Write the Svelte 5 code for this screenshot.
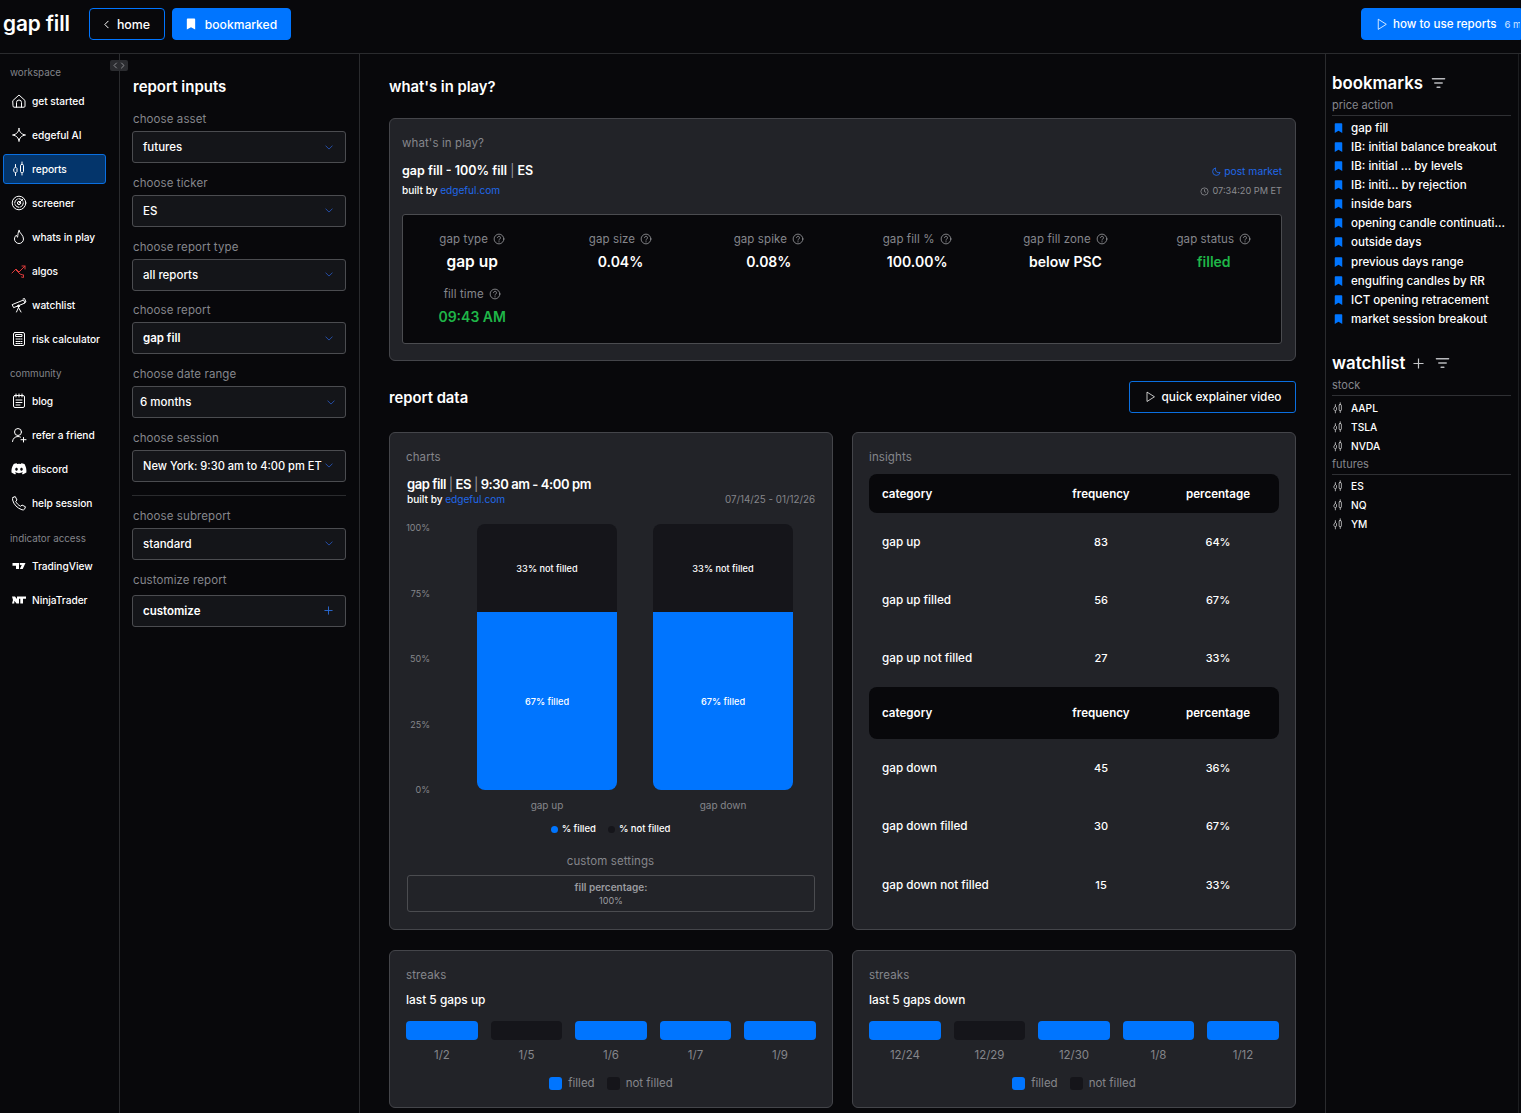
<script>
  const I = {
    home: '<path d="M2 7.500 8 2l6 5.500v5.700a1 1 0 0 1-1 1H3a1 1 0 0 1-1-1z"/><path d="M5.500 14.200V9.500a2.500 2.500 0 0 1 5 0v4.700"/>',
    spark: '<path d="M8 1.500c.5 3.700 2.300 5.800 6.500 6.500-4.200.7-6 2.800-6.500 6.500C7.500 10.800 5.700 8.700 1.500 8 5.700 7.300 7.500 5.200 8 1.500z"/>',
    candle: '<path d="M4.500 3.500v2.500M4.500 12v2.500M11 1v2.500M11 11.500V14"/><path d="M3 7.500 4.500 6 6 7.500V10.500L4.500 12 3 10.500z"/><rect x="9.500" y="3.500" width="3" height="8" rx="1"/>',
    radar: '<circle cx="8" cy="8" r="6.800"/><circle cx="8" cy="8" r="4.300" stroke-dasharray="5 1.500"/><circle cx="8" cy="8" r="1.600"/><path d="m8 8 4-4"/>',
    flame: '<path d="M8 1.500c.5 2.500 4.500 4.600 4.500 8.500a4.500 4.500 0 0 1-9 0c0-1.800 1-3 1.800-3.800.2 1 .7 1.700 1.300 2C7 6 6.800 3.500 8 1.500z"/>',
    algos: '<path d="M1 10 5 6l3 3 6-6M11 3h3v3M5 7l4 4 3 1M10.500 14l2 .5V12"/>',
    scope: '<path d="m1.500 7.500 11-4.500 1.500 3-11 4.500zM12 2l1.500-.5 1.500 3.500-1.500.5M7.500 9v1.500M5.500 15l2-4.500 2.500 4.500"/><circle cx="7.500" cy="9" r="1"/>',
    calc: '<rect x="2.500" y="1.500" width="11" height="13" rx="1.500"/><rect x="5" y="3.500" width="6" height="2"/><path d="M5 8h1.500M7.500 8H9M10 8h1M5 10.500h1.500M7.500 10.500H9M10 10.500h1M5 12.500h1.500M7.500 12.500H9M10 12.500h1"/>',
    blog: '<rect x="2.500" y="2.500" width="11" height="12" rx="1.500"/><path d="M5 1v3M8 1v3M11 1v3M5 7h6M5 9.500h6M5 12h4"/>',
    user: '<circle cx="7" cy="5" r="3.500"/><path d="M1.500 14.500c.3-3 2.500-5 5.500-5 1 0 1.700.2 2.500.6M12.500 10.500v4.500M10 12.700h5"/>',
    phone: '<path d="M2 2.500 4.200 1.500 6 5 4.700 6.300c.8 2 2.700 4 5 5l1.300-1.300 3.500 1.800-1 2.400c-.4.700-1.500.900-2.500.6C6 13 2.800 9.500 1.600 5c-.2-1 0-2 .4-2.500z"/>',
    filter: '<path d="M1.500 3h13M4 7.500h8M6.500 12h3"/>',
    q: '<circle cx="8" cy="8" r="6.500"/><path d="M6 6.200a2 2 0 1 1 3 1.800c-.7.400-1 .8-1 1.500"/><path d="M8 11.500v.5"/>',
    play: '<path d="M4 2v12l9.500-6z"/>'
  };
  const nav1 = [['home','get started'],['spark','edgeful AI'],['candle','reports'],['radar','screener'],['flame','whats in play'],['algos','algos'],['scope','watchlist'],['calc','risk calculator']];
  const nav2 = [['blog','blog'],['user','refer a friend'],['discord','discord'],['phone','help session']];
  const nav3 = [['tv','TradingView'],['nt','NinjaTrader']];
  const selects = [
    ['choose asset','futures',''],['choose ticker','ES',''],['choose report type','all reports',''],
    ['choose report','gap fill','semi'],['choose date range','6 months','narrow'],['choose session','New York: 9:30 am to 4:00 pm ET','tight']
  ];
  const marks = ['gap fill','IB: initial balance breakout','IB: initial ... by levels','IB: initi... by rejection','inside bars','opening candle continuati...','outside days','previous days range','engulfing candles by RR','ICT opening retracement','market session breakout'];
  const stats = [['gap type','gap up','big'],['gap size','0.04%',''],['gap spike','0.08%',''],['gap fill %','100.00%',''],['gap fill zone','below PSC',''],['gap status','filled','green'],['fill time','09:43 AM','green']];
  const rows1 = [['gap up','83','64%'],['gap up filled','56','67%'],['gap up not filled','27','33%']];
  const rows2 = [['gap down','45','36%'],['gap down filled','30','67%'],['gap down not filled','15','33%']];
  const streaks = [
    ['last 5 gaps up',[['1/2',1],['1/5',0],['1/6',1],['1/7',1],['1/9',1]]],
    ['last 5 gaps down',[['12/24',1],['12/29',0],['12/30',1],['1/8',1],['1/12',1]]]
  ];
</script>

{#snippet icon(name, cls = '')}
  <svg class={'ico ' + cls} viewBox="0 0 16 16" fill="none" stroke="currentColor" stroke-width="1" stroke-linecap="round" stroke-linejoin="round">{@html I[name]}</svg>
{/snippet}
{#snippet mark(cls = '')}
  <svg class={'mark ' + cls} viewBox="0 0 12 14"><path d="M1 1.500A1 1 0 0 1 2 .5h8a1 1 0 0 1 1 1v12L6 10.800 1 13.500z" fill="currentColor"/></svg>
{/snippet}
{#snippet chev()}
  <svg class="chev" viewBox="0 0 10 6" fill="none" stroke="currentColor" stroke-width="1" stroke-linecap="round" stroke-linejoin="round"><path d="m1 1 4 4 4-4"/></svg>
{/snippet}

<div class="page">
  <header>
    <h1>gap fill</h1>
    <button class="hbtn outline"><svg class="lt" viewBox="0 0 6 10" fill="none" stroke="currentColor" stroke-width="1.200" stroke-linecap="round" stroke-linejoin="round"><path d="M5 1 1 5l4 4"/></svg>home</button>
    <button class="hbtn solid">{@render mark('wm')}bookmarked</button>
    <button class="hbtn solid how">{@render icon('play','hp')}how to use reports <span class="mins">6 min</span></button>
  </header>

  <div class="body">
    <nav>
      <span class="toggle">
        <svg viewBox="0 0 18 11" fill="none" stroke="#8b8c90" stroke-width="1" stroke-linecap="round" stroke-linejoin="round"><path d="M6.500 3 4 5.500 6.500 8M11.500 3 14 5.500 11.500 8"/></svg>
      </span>
      <div class="ngroup first">workspace</div>
      {#each nav1 as [ic, label]}
        <a class="nitem" class:active={label === 'reports'} class:red={ic === 'algos'}>
          {@render icon(ic, 'nico')}<span>{label}</span>
        </a>
      {/each}
      <div class="ngroup second">community</div>
      {#each nav2 as [ic, label]}
        <a class="nitem">
          {#if ic === 'discord'}
            <svg class="ico nico" viewBox="0 0 16 16"><path fill="currentColor" d="M13.300 3.100A12 12 0 0 0 10.300 2.200l-.4.800a11 11 0 0 0-3.800 0l-.4-.8a12 12 0 0 0-3 .9C.800 6 .3 8.800.5 11.500a12 12 0 0 0 3.700 1.900l.8-1.300-1.200-.6.300-.2c2.400 1.100 5.300 1.100 7.700 0l.3.200-1.200.6.800 1.300a12 12 0 0 0 3.700-1.900c.3-3.100-.5-5.900-1.900-8.400zM5.500 9.800c-.7 0-1.300-.7-1.300-1.500s.6-1.500 1.300-1.500 1.300.7 1.300 1.500-.6 1.500-1.300 1.500zm5 0c-.7 0-1.300-.7-1.300-1.500s.6-1.500 1.300-1.500 1.300.7 1.300 1.500-.6 1.500-1.300 1.500z"/></svg>
          {:else}
            {@render icon(ic, 'nico')}
          {/if}
          <span>{label}</span>
        </a>
      {/each}
      <div class="ngroup third">indicator access</div>
      {#each nav3 as [ic, label]}
        <a class="nitem">
          {#if ic === 'tv'}
            <svg class="ico nico" viewBox="0 0 16 16"><path fill="currentColor" d="M1.500 5h6.500v6H5V7.800H1.500zM9 5h5.500l-2.800 6H8.800l2.100-4.200a1.300 1.300 0 0 1-1.900-1.800z"/></svg>
          {:else}
            <svg class="ico nico" viewBox="0 0 16 16"><path fill="currentColor" d="M1 4.500h3l2 2.500V4.500h9v2.300h-3v4.700H9.300V6.800H8v4.700H5.500L3.300 8.800v2.700H1l1-3.500z"/></svg>
          {/if}
          <span>{label}</span>
        </a>
      {/each}
    </nav>

    <aside class="inputs">
      <h2>report inputs</h2>
      {#each selects as [label, value, cls]}
        <div class="field">
          <label>{label}</label>
          <div class={'select ' + cls}><span>{value}</span>{@render chev()}</div>
        </div>
      {/each}
      <hr />
      <div class="field">
        <label>choose subreport</label>
        <div class="select"><span>standard</span>{@render chev()}</div>
      </div>
      <div class="field cust">
        <label>customize report</label>
        <div class="select semi"><span>customize</span><svg class="plus" viewBox="0 0 10 10" fill="none" stroke="currentColor" stroke-width="1"><path d="M5 .5v9M.5 5h9"/></svg></div>
      </div>
    </aside>

    <main>
      <h2 class="sect">what's in play?</h2>
      <section class="card play">
        <div class="clabel">what's in play?</div>
        <div class="phead">
          <div>
            <div class="ptitle">gap fill - 100% fill <i>|</i> ES</div>
            <div class="built">built by <b>edgeful.com</b></div>
          </div>
          <div class="pright">
            <div class="post"><svg viewBox="0 0 10 10" fill="none" stroke="currentColor" stroke-width="1"><path d="M4 1a4.200 4.200 0 1 0 5 5A3.800 3.800 0 0 1 4 1z"/></svg>post market</div>
            <div class="clock"><svg viewBox="0 0 10 10" fill="none" stroke="currentColor" stroke-width=".9"><circle cx="5" cy="5" r="4"/><path d="M5 2.500V5l1.700 1"/></svg>07:34:20 PM ET</div>
          </div>
        </div>
        <div class="inner">
          <div class="stats">
            {#each stats as [l, v, c]}
              <div class="stat">
                <div class="sl">{l}{@render icon('q','qi')}</div>
                <div class={'sv ' + c}>{v}</div>
              </div>
            {/each}
          </div>
        </div>
      </section>

      <div class="rd">
        <h2 class="sect">report data</h2>
        <button class="qev">{@render icon('play','qp')}quick explainer video</button>
      </div>

      <div class="two">
        <section class="card charts">
          <div class="clabel">charts</div>
          <div class="ctitle">gap fill <i>|</i> ES <i>|</i> 9:30 am - 4:00 pm</div>
          <div class="csub">
            <div class="built">built by <b>edgeful.com</b></div>
            <div class="range">07/14/25 - 01/12/26</div>
          </div>
          <div class="chart">
            <div class="yaxis"><span>100%</span><span>75%</span><span>50%</span><span>25%</span><span>0%</span></div>
            <div class="plot">
              {#each ['gap up','gap down'] as name}
                <div class="col">
                  <div class="bar">
                    <div class="nf">33% not filled</div>
                    <div class="fl">67% filled</div>
                  </div>
                  <div class="bname">{name}</div>
                </div>
              {/each}
            </div>
          </div>
          <div class="legend">
            <span><i class="dot blue"></i>% filled</span>
            <span><i class="dot dark"></i>% not filled</span>
          </div>
          <div class="cs">custom settings</div>
          <div class="csbox">
            <b>fill percentage:</b>
            <span>100%</span>
          </div>
        </section>

        <section class="card insights">
          <div class="clabel">insights</div>
          <div class="thead h1"><span>category</span><span class="c">frequency</span><span class="c">percentage</span></div>
          {#each rows1 as [a, b, c]}
            <div class="trow r58"><span>{a}</span><span class="c">{b}</span><span class="c">{c}</span></div>
          {/each}
          <div class="thead h2"><span>category</span><span class="c">frequency</span><span class="c">percentage</span></div>
          {#each rows2 as [a, b, c]}
            <div class="trow"><span>{a}</span><span class="c">{b}</span><span class="c">{c}</span></div>
          {/each}
        </section>

        {#each streaks as [title, items]}
          <section class="card streak">
            <div class="clabel">streaks</div>
            <div class="stitle">{title}</div>
            <div class="sgrid">
              {#each items as [d, f]}
                <div class="sc"><div class="sb" class:on={f}></div><span>{d}</span></div>
              {/each}
            </div>
            <div class="slegend">
              <span><i class="sq blue"></i>filled</span>
              <span><i class="sq dark"></i>not filled</span>
            </div>
          </section>
        {/each}
      </div>
    </main>

    <aside class="right">
      <h3 class="rh">bookmarks {@render icon('filter','fi')}</h3>
      <div class="rsub">price action</div>
      {#each marks as m}
        <div class="ritem">{@render mark('rm')}<span>{m}</span></div>
      {/each}
      <h3 class="rh wl">watchlist
        <svg class="wplus" viewBox="0 0 12 12" fill="none" stroke="currentColor" stroke-width="1.300"><path d="M6 .5v11M.5 6h11"/></svg>
        {@render icon('filter','fi')}
      </h3>
      <div class="rsub">stock</div>
      {#each ['AAPL','TSLA','NVDA'] as t}
        <div class="ritem up">{@render icon('candle','rc')}<span>{t}</span></div>
      {/each}
      <div class="rsub fut">futures</div>
      {#each ['ES','NQ','YM'] as t}
        <div class="ritem up">{@render icon('candle','rc')}<span>{t}</span></div>
      {/each}
    </aside>
  </div>
</div>

<style>
  :global(body) { margin: 0; background: #08080b; }
  .page {
    width: 1521px; height: 1113px; overflow: hidden; background: #08080b; color: #fff;
    font-family: Inter, "Liberation Sans", sans-serif; font-size: 11px;
    display: flex; flex-direction: column;
  }
  button { font: inherit; color: inherit; cursor: pointer; }
  h1, h2, h3 { margin: 0; }
  header {
    height: 48px; padding: 0 0 5px 3px; flex: none; border-bottom: 1px solid #2a2b2e; display: flex; align-items: center;
    box-sizing: content-box; position: relative;
  }
  h1 { font-size: 20.800px; font-weight: 600; width: 86px; letter-spacing: -.1px; margin-top: -2px; }
  .hbtn {
    height: 32px; border-radius: 4px; display: inline-flex; align-items: center; font-size: 12.100px; font-weight: 500;
    border: 1px solid #0075ff; background: #0075ff; padding: 0; box-sizing: border-box; white-space: nowrap;
  }
  .outline { background: transparent; width: 76px; justify-content: center; gap: 8px; font-size: 12.400px; }
  .lt { width: 5px; height: 9px; }
  .solid { margin-left: 7px; width: 119px; justify-content: center; gap: 9px; }
  .how { margin-left: auto; width: 160px; justify-content: flex-start; padding-left: 13px; gap: 5px; flex: none; overflow: hidden; border-radius: 4px 0 0 4px; font-size: 11.600px; }
  .hp { width: 13px; height: 13px; flex: none; }
  .mins { color: #b9d8ff; font-size: 9.500px; margin-left: 3px; }
  .mark { width: 10px; height: 12px; flex: none; }
  .wm { color: #fff; }

  .body { display: flex; flex: 1; min-height: 0; }
  nav { flex: none; border-right: 1px solid #2a2b2e; position: relative; padding: 0 3px; box-sizing: content-box; width: 113px; }
  .toggle { position: absolute; right: -9px; top: 6px; width: 18px; height: 11px; background: #2b2c30; border-radius: 2px; display: block; z-index: 2; }
  .toggle svg { display: block; width: 18px; height: 11px; }
  .ngroup { color: #83848a; font-size: 9.800px; height: 20px; line-height: 20px; padding-left: 7px; margin-bottom: 2px; }
  .ngroup.first { margin-top: 9px; margin-bottom: 3px; }
  .ngroup.second { margin-top: 10px; }
  .ngroup.third { margin-top: 11px; }
  .nitem {
    height: 30px; margin-bottom: 4px; display: flex; align-items: center; gap: 5px; padding-left: 8px; box-sizing: border-box;
    font-size: 10.200px; font-weight: 500; border-radius: 3px; border: 1px solid transparent; white-space: nowrap; width: 103px;
    letter-spacing: -.05px;
  }
  .nitem.active { background: #04356b; border-color: #0a6fe0; }
  .nitem .nico { width: 16px; height: 16px; margin-left: -1px; color: #fff; flex: none; }
  .nitem.red .nico { color: #d93a3a; }
  .ico { display: block; }

  .inputs { flex: none; border-right: 1px solid #2a2b2e; padding: 0 13px 0 12px; box-sizing: border-box; width: 240px; }
  .inputs h2 { font-size: 15px; font-weight: 600; margin-top: 23px; height: 20px; line-height: 20px; margin-bottom: 15px; padding-left: 1px; }
  .field { margin-bottom: 12.800px; }
  .field label { display: block; color: #85868b; font-size: 11.500px; height: 20px; line-height: 14.500px; margin-bottom: -1px; letter-spacing: .1px; padding-left: 1px; }
  .select {
    height: 32px; border: 1px solid #4b4c50; border-radius: 3px; background: #141519; display: flex; align-items: center;
    padding: 0 12px 0 10px; justify-content: space-between; font-size: 11.500px; font-weight: 500; box-sizing: border-box;
  }
  .select.semi { font-weight: 600; }
  .select.narrow { padding: 0 10px 0 7px; }
  .select.tight { white-space: nowrap; font-size: 11.100px; }
  .chev { width: 8px; height: 5px; color: #2a5cc8; flex: none; }
  .plus { width: 9px; height: 9px; color: #2a6cd8; flex: none; }
  hr { border: 0; border-top: 1px solid #2a2b2e; margin: 0 0 13px; }
  .field.cust label { margin-top: 1px; }
  .field.cust .select { margin-top: 3px; }

  main { flex: none; padding: 0 29px; box-sizing: border-box; border-right: 1px solid #2a2b2e; width: 966px; }
  .sect { font-size: 14.800px; font-weight: 600; line-height: 20px; }
  main > .sect { margin-top: 23px; margin-bottom: 21px; }
  .card { background: #222328; border: 1px solid #44454a; border-radius: 6px; box-sizing: border-box; }
  .play { height: 243px; padding: 14px 13px 0 12px; position: relative; }
  .clabel { color: #85868b; font-size: 11.500px; line-height: 20px; letter-spacing: .1px; }
  .phead { display: flex; justify-content: space-between; margin-top: 8px; }
  .ptitle { font-size: 12.500px; font-weight: 600; line-height: 20px; }
  .ptitle i, .ctitle i { font-style: normal; font-weight: 400; color: #9b9ca0; }
  .built { font-size: 10.100px; font-weight: 500; line-height: 20px; color: #fff; }
  .phead .built { margin-top: -1px; }
  .built b { color: #2068e8; font-weight: 400; }
  .pright { text-align: right; }
  .post { color: #2068e8; font-size: 10.300px; line-height: 20px; display: flex; justify-content: flex-end; align-items: center; gap: 3px; }
  .post svg, .clock svg { width: 9px; height: 9px; }
  .clock { color: #8b8c90; font-size: 9.200px; line-height: 20px; display: flex; justify-content: flex-end; align-items: center; gap: 3px; }
  .inner { background: #08080b; border: 1px solid #4b4c50; border-radius: 3px; height: 130px; margin-top: 13px; padding-top: 14px; box-sizing: border-box; }
  .stats { display: grid; grid-template-columns: repeat(6, 148.330px); margin-left: -5px; row-gap: 9px; }
  .stat { text-align: center; }
  .sl { color: #85868b; font-size: 11.500px; display: flex; justify-content: center; align-items: center; gap: 5px; line-height: 20px; letter-spacing: .1px; }
  .qi { width: 12px; height: 12px; color: #a4a5aa; }
  .sv { font-size: 14px; font-weight: 600; line-height: 26px; }
  .sv.big { font-size: 15.500px; }
  .sv.green { color: #1fb648; }

  .rd { display: flex; justify-content: space-between; align-items: center; margin-top: 20px; height: 32px; margin-bottom: 19px; }
  .rd .sect { padding-top: 1px; }
  .qev { height: 32px; width: 167px; border: 1px solid #0a6fe0; border-radius: 3px; background: #08080b; display: flex; align-items: center; justify-content: center; gap: 6px; font-size: 11.800px; font-weight: 500; }
  .qp { width: 12px; height: 12px; flex: none; }
  .two { display: grid; grid-template-columns: 444px 444px; column-gap: 19px; row-gap: 20px; }
  .charts { height: 498px; padding: 14px 17px 0 16px; }
  .ctitle { font-size: 13px; font-weight: 600; line-height: 20px; margin-top: 7px; letter-spacing: -.42px; padding-left: 1px; }
  .csub { display: flex; justify-content: space-between; align-items: center; margin-top: -5px; height: 20px; padding-left: 1px; }
  .range { color: #85868b; font-size: 9.800px; }
  .chart { display: flex; margin-top: 15px; position: relative; }
  .yaxis { width: 24px; flex: none; height: 274px; margin-top: -2px; display: flex; flex-direction: column; justify-content: space-between; align-items: flex-end; color: #85868b; font-size: 9px; line-height: 12px; }
  .plot { display: grid; grid-template-columns: 176px 176px; padding-left: 29px; }
  .col { display: flex; flex-direction: column; align-items: center; }
  .bar { width: 140.600px; height: 266px; border-radius: 8px; overflow: hidden; display: flex; flex-direction: column; font-size: 9.200px; font-weight: 500; }
  .nf { height: 88px; background: #15151a; display: flex; align-items: center; justify-content: center; }
  .fl { flex: 1; background: #0075ff; display: flex; align-items: center; justify-content: center; }
  .bname { color: #85868b; font-size: 10px; line-height: 16px; margin-top: 7px; }
  .legend { display: flex; justify-content: center; gap: 12px; font-size: 9.500px; font-weight: 500; margin-top: 9px; line-height: 14px; }
  .legend span { display: flex; align-items: center; gap: 4px; }
  .dot { width: 7px; height: 7px; border-radius: 50%; display: block; }
  .blue { background: #0075ff; }
  .dark { background: #15151a; }
  .cs { text-align: center; color: #85868b; font-size: 11.500px; line-height: 20px; margin-top: 15px; letter-spacing: .1px; }
  .csbox { height: 37px; border: 1px solid #4b4c50; border-radius: 3px; margin: 4px 0 0 1px; box-sizing: border-box; display: flex; flex-direction: column; align-items: center; justify-content: center; color: #9b9ca0; font-size: 9px; line-height: 13px; }
  .csbox b { font-weight: 600; font-size: 10px; }
  .insights { height: 498px; padding: 14px 16px 0; }
  .thead, .trow { display: grid; grid-template-columns: 163px 112px 122px; align-items: center; padding-left: 13px; box-sizing: border-box; font-size: 11px; }
  .thead { background: #08080b; border-radius: 8px; font-weight: 600; font-size: 11.600px; }
  .trow { height: 58.300px; font-weight: 500; }
  .trow.r58 { height: 58px; }
  .trow > :first-child { font-size: 11.700px; }
  .thead.h1 { height: 39px; margin-top: 7px; }
  .thead.h2 { height: 52px; }
  .c { text-align: center; }
  .streak { height: 158px; padding: 14px 16px 0; }
  .stitle { font-size: 11.900px; font-weight: 500; line-height: 20px; margin-top: 5px; }
  .sgrid { display: grid; grid-template-columns: repeat(5, 1fr); gap: 12.600px; margin-top: 11px; }
  .sc { display: flex; flex-direction: column; align-items: center; color: #85868b; font-size: 11.500px; }
  .sc span { line-height: 20px; margin-top: 5px; }
  .sb { width: 100%; height: 19px; background: #15151a; border-radius: 4px; }
  .sb.on { background: #0075ff; }
  .slegend { display: flex; justify-content: center; gap: 12px; color: #85868b; font-size: 11.500px; margin-top: 11px; line-height: 14px; }
  .slegend span { display: flex; align-items: center; gap: 6px; }
  .sq { width: 13px; height: 13px; border-radius: 3px; display: block; }

  .right { flex: 1; padding: 0 7px 0 6px; box-sizing: border-box; min-width: 0; border-right: 1px solid #1c1d20; margin-right: 2px; }
  .rh { font-size: 16.800px; font-weight: 600; line-height: 24px; display: flex; align-items: center; gap: 8px; margin-top: 17px; }
  .rh.wl { margin-top: 22.500px; }
  .fi { width: 15px; height: 15px; color: #b8b9bd; stroke-width: 1.500; }
  .wplus { width: 11px; height: 11px; color: #c4c5c8; margin-right: 3px; }
  .rsub { color: #85868b; font-size: 11px; line-height: 20px; border-bottom: 1px solid #2f3034; height: 21px; box-sizing: border-box; margin-bottom: 2px; }
  .rsub.fut { margin-top: -1px; margin-bottom: 1px; }
  .ritem { display: flex; align-items: center; height: 19.150px; font-size: 11.600px; font-weight: 500; white-space: nowrap; gap: 8px; }
  .rm { color: #0075ff; margin-left: 2px; width: 9px; height: 12px; }
  .ritem.up { font-weight: 500; font-size: 10.200px; gap: 7px; }
  .rc { width: 12px; height: 12px; margin-left: 0; color: #d8d8da; }
</style>
